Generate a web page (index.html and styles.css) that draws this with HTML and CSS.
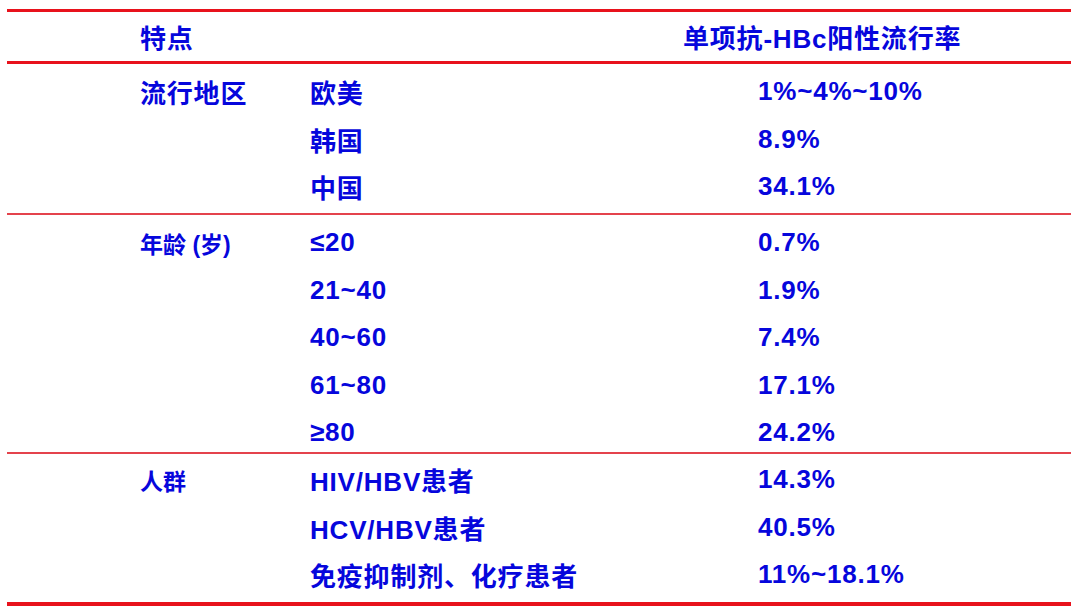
FILE: index.html
```html
<!DOCTYPE html>
<html lang="zh-CN">
<head>
<meta charset="utf-8">
<title>单项抗-HBc阳性流行率</title>
<link rel="stylesheet" href="styles.css">
</head>
<body>
<div class="page">
  <div class="table">
    <div class="head">
      <span class="h1">特点</span>
      <span class="h2">单项抗-HBc阳性流行率</span>
    </div>
    <div class="sec sec-region">
      <div class="label">流行地区</div>
      <div class="c2">欧美</div><div class="c3">1%~4%~10%</div>
      <div class="c2">韩国</div><div class="c3">8.9%</div>
      <div class="c2">中国</div><div class="c3">34.1%</div>
    </div>
    <div class="sec sec-age">
      <div class="label small">年龄 (岁)</div>
      <div class="c2">≤20</div><div class="c3">0.7%</div>
      <div class="c2">21~40</div><div class="c3">1.9%</div>
      <div class="c2">40~60</div><div class="c3">7.4%</div>
      <div class="c2">61~80</div><div class="c3">17.1%</div>
      <div class="c2">≥80</div><div class="c3">24.2%</div>
    </div>
    <div class="sec sec-group">
      <div class="label small">人群</div>
      <div class="c2">HIV/HBV患者</div><div class="c3">14.3%</div>
      <div class="c2">HCV/HBV患者</div><div class="c3">40.5%</div>
      <div class="c2">免疫抑制剂、化疗患者</div><div class="c3">11%~18.1%</div>
    </div>
  </div>
</div>
</body>
</html>
```

FILE: styles.css
```css
html, body {
  margin: 0;
  padding: 0;
  background: #ffffff;
}

.page {
  padding: 9px 0 0 7px;
  width: 1064px;
}

.table {
  font-family: "Liberation Sans", Arial, "Noto Sans CJK SC", sans-serif;
  font-weight: bold;
  font-size: 26px;
  letter-spacing: 0.8px;
  color: #0606dc;
  border-top: 3px solid #e8121c;
}

.head {
  display: grid;
  grid-template-columns: 543px 1fr;
  align-items: center;
  height: 49px;
  padding-left: 133px;
  border-bottom: 3px solid #e8121c;
}

.sec {
  display: grid;
  grid-template-columns: 170px 448px 1fr;
  grid-auto-rows: 47.5px;
  align-items: center;
  padding-left: 133px;
  border-bottom: 2px solid #e4434c;
}

.sec-region {
  padding-top: 4px;
  padding-bottom: 2.5px;
}

.sec-age {
  padding-top: 4px;
  height: 233px;
}

.sec-group {
  padding-top: 2px;
  padding-bottom: 3.5px;
  border-bottom: 4px solid #e8121c;
}

.label {
  grid-column: 1;
  grid-row: 1;
}

.label.small {
  font-size: 23px;
  letter-spacing: 0;
}

.c2 {
  grid-column: 2;
  white-space: nowrap;
}

.c3 {
  grid-column: 3;
  white-space: nowrap;
}
```
